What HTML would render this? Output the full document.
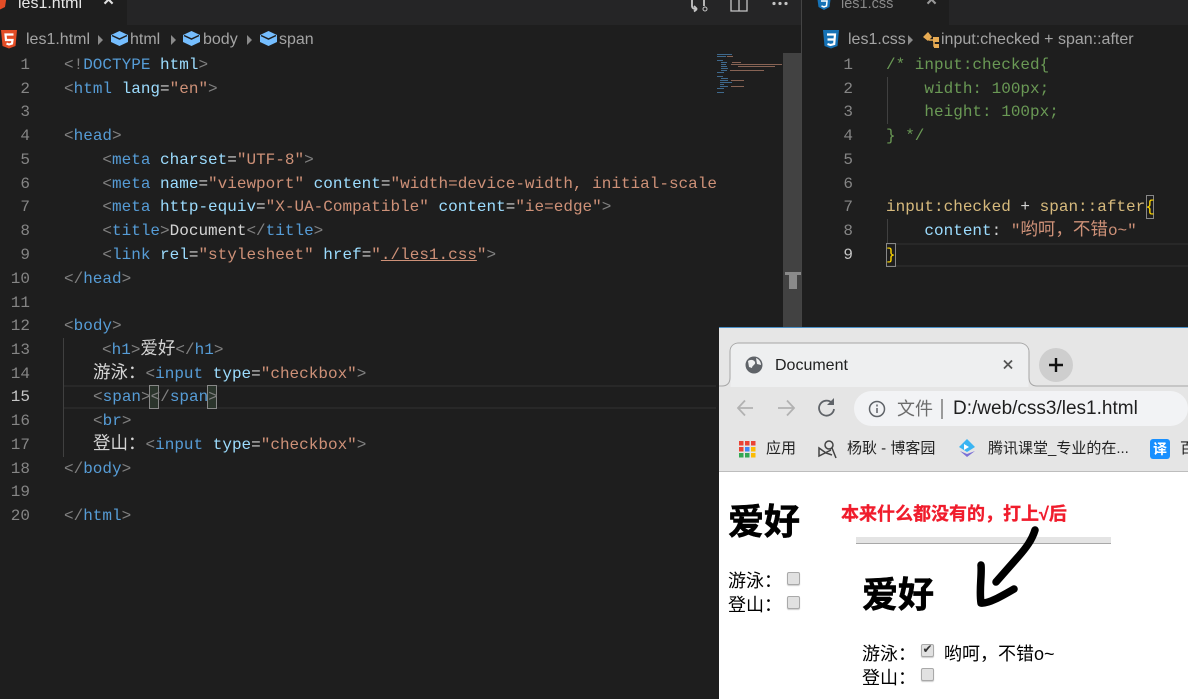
<!DOCTYPE html>
<html lang="zh"><head><meta charset="utf-8"><title>Document</title>
<style>
*{box-sizing:border-box}
html,body{margin:0;padding:0;width:1188px;height:699px;overflow:hidden;background:#1e1e1e}
body{position:relative;font-family:"Liberation Sans","Noto Sans CJK SC",sans-serif}
.a{position:absolute;white-space:pre}
.c{font:16px/24px "Liberation Mono","Noto Sans CJK SC",monospace;color:#d4d4d4;height:24px}
.z{font-size:17.5px;line-height:24px}
.n{font:16px/24px "Liberation Mono",monospace;color:#858585;text-align:right;width:30px;height:24px}
.g{color:#808080}.t{color:#569cd6}.h{color:#9cdcfe}.s{color:#ce9178}.m{color:#6a9955}.y{color:#d7ba7d}
.b{font-size:16px;line-height:20px;color:#a4a4a4}
.cb{position:absolute;width:13px;height:13px;background:#e1e1e1;border:1px solid #a9a9a9;border-radius:2px;box-shadow:0 1px 1px #ccc}
.k{color:#000;font-size:18px;line-height:24px}
.h1{color:#000;font-weight:bold;font-size:36px;line-height:44px;-webkit-text-stroke:.6px #000}
.bm{font-size:15px;line-height:20px;color:#222}
</style></head><body>
<!-- VS Code left -->
<div class="a" style="left:0;top:0;width:802px;height:25px;background:#252526"></div>
<div class="a" style="left:0;top:0;width:127px;height:25px;background:#1e1e1e"></div>
<div class="a" style="left:18px;top:-6px;font-size:16px;line-height:20px;color:#e8e8e8">les1.html</div>
<div class="a" style="left:103px;top:-9px;font-size:19px;line-height:20px;color:#e0e0e0;font-weight:bold">×</div>
<svg class="a" style="left:0;top:0" width="802" height="52">
<path d="M-8-6H7L5 7-1 10-6 7Z" fill="#e44d26"/>
<path d="M1 30H17L15.500 46 9 48.500 2.500 46Z" fill="#e44d26"/>
<path d="M13.500 34.500H5.500L6 40H12.500L12 43.500 9 44.500 6.500 43.500" fill="none" stroke="#fff" stroke-width="2.200"/>
<path d="M98 35L103 40 98 45Z" fill="#8a8a8a"/><path d="M171 35L176 40 171 45Z" fill="#8a8a8a"/><path d="M247 35L252 40 247 45Z" fill="#8a8a8a"/>
<g><path d="M111 35L119.500 31 128 35V42L119.500 46 111 42Z" fill="#75beff"/><path d="M112 35.500L119.500 39 127 35.500" fill="none" stroke="#1e1e1e" stroke-width="1.500"/></g>
<g transform="translate(72,0)"><path d="M111 35L119.500 31 128 35V42L119.500 46 111 42Z" fill="#75beff"/><path d="M112 35.500L119.500 39 127 35.500" fill="none" stroke="#1e1e1e" stroke-width="1.500"/></g>
<g transform="translate(149,0)"><path d="M111 35L119.500 31 128 35V42L119.500 46 111 42Z" fill="#75beff"/><path d="M112 35.500L119.500 39 127 35.500" fill="none" stroke="#1e1e1e" stroke-width="1.500"/></g>
<path d="M692 0V6C692 9 695 9 697 9M697 9L694 6M697 9L694 11.500M704 0V6" fill="none" stroke="#c5c5c5" stroke-width="1.800"/><circle cx="705" cy="9" r="2" fill="none" stroke="#c5c5c5"/>
<path d="M731 0V11H747V0M739 0V11" fill="none" stroke="#c5c5c5" stroke-width="1.300"/>
<circle cx="774" cy="3.500" r="1.600" fill="#c5c5c5"/><circle cx="780" cy="3.500" r="1.600" fill="#c5c5c5"/><circle cx="786" cy="3.500" r="1.600" fill="#c5c5c5"/>
</svg>
<div class="a b" style="left:26px;top:30px">les1.html</div>
<div class="a b" style="left:130px;top:30px">html</div>
<div class="a b" style="left:203px;top:30px">body</div>
<div class="a b" style="left:279px;top:30px">span</div>

<div class="a" style="left:64px;top:385px;width:652px;height:24px;border-top:2px solid #282828;border-bottom:2px solid #282828"></div>
<div class="a" style="left:63px;top:338px;width:1px;height:119px;background:#404040"></div>
<div class="a" style="left:149px;top:385px;width:10px;height:24px;border:1px solid #888;background:#2b352c"></div>
<div class="a" style="left:207px;top:385px;width:10px;height:24px;border:1px solid #888;background:#2b352c"></div>

<div class="a n" style="left:0;top:53px">1</div>
<div class="a n" style="left:0;top:77px">2</div>
<div class="a n" style="left:0;top:100px">3</div>
<div class="a n" style="left:0;top:124px">4</div>
<div class="a n" style="left:0;top:148px">5</div>
<div class="a n" style="left:0;top:172px">6</div>
<div class="a n" style="left:0;top:195px">7</div>
<div class="a n" style="left:0;top:219px">8</div>
<div class="a n" style="left:0;top:243px">9</div>
<div class="a n" style="left:0;top:267px">10</div>
<div class="a n" style="left:0;top:291px">11</div>
<div class="a n" style="left:0;top:314px">12</div>
<div class="a n" style="left:0;top:338px">13</div>
<div class="a n" style="left:0;top:362px">14</div>
<div class="a n" style="left:0;top:385px;color:#c6c6c6">15</div>
<div class="a n" style="left:0;top:409px">16</div>
<div class="a n" style="left:0;top:433px">17</div>
<div class="a n" style="left:0;top:457px">18</div>
<div class="a n" style="left:0;top:480px">19</div>
<div class="a n" style="left:0;top:504px">20</div>

<div style="position:absolute;left:0;top:0;width:716px;height:699px;overflow:hidden">
<div class="a c" style="left:64px;top:53px"><span class="g">&lt;!</span><span class="t">DOCTYPE</span> <span class="h">html</span><span class="g">&gt;</span></div>
<div class="a c" style="left:64px;top:77px"><span class="g">&lt;</span><span class="t">html</span> <span class="h">lang</span>=<span class="s">"en"</span><span class="g">&gt;</span></div>
<div class="a c" style="left:64px;top:124px"><span class="g">&lt;</span><span class="t">head</span><span class="g">&gt;</span></div>
<div class="a c" style="left:64px;top:148px">    <span class="g">&lt;</span><span class="t">meta</span> <span class="h">charset</span>=<span class="s">"UTF-8"</span><span class="g">&gt;</span></div>
<div class="a c" style="left:64px;top:172px">    <span class="g">&lt;</span><span class="t">meta</span> <span class="h">name</span>=<span class="s">"viewport"</span> <span class="h">content</span>=<span class="s">"width=device-width, initial-scale=1.0"</span><span class="g">&gt;</span></div>
<div class="a c" style="left:64px;top:195px">    <span class="g">&lt;</span><span class="t">meta</span> <span class="h">http-equiv</span>=<span class="s">"X-UA-Compatible"</span> <span class="h">content</span>=<span class="s">"ie=edge"</span><span class="g">&gt;</span></div>
<div class="a c" style="left:64px;top:219px">    <span class="g">&lt;</span><span class="t">title</span><span class="g">&gt;</span>Document<span class="g">&lt;/</span><span class="t">title</span><span class="g">&gt;</span></div>
<div class="a c" style="left:64px;top:243px">    <span class="g">&lt;</span><span class="t">link</span> <span class="h">rel</span>=<span class="s">"stylesheet"</span> <span class="h">href</span>=<span class="s">"<u>./les1.css</u>"</span><span class="g">&gt;</span></div>
<div class="a c" style="left:64px;top:267px"><span class="g">&lt;/</span><span class="t">head</span><span class="g">&gt;</span></div>
<div class="a c" style="left:64px;top:314px"><span class="g">&lt;</span><span class="t">body</span><span class="g">&gt;</span></div>
<div class="a c" style="left:102px;top:338px"><span class="g">&lt;</span><span class="t">h1</span><span class="g">&gt;</span><span class="z">爱好</span><span class="g">&lt;/</span><span class="t">h1</span><span class="g">&gt;</span></div>
<div class="a c" style="left:93px;top:362px"><span class="z">游泳：</span><span class="g">&lt;</span><span class="t">input</span> <span class="h">type</span>=<span class="s">"checkbox"</span><span class="g">&gt;</span></div>
<div class="a c" style="left:93px;top:385px"><span class="g">&lt;</span><span class="t">span</span><span class="g">&gt;&lt;/</span><span class="t">span</span><span class="g">&gt;</span></div>
<div class="a c" style="left:93px;top:409px"><span class="g">&lt;</span><span class="t">br</span><span class="g">&gt;</span></div>
<div class="a c" style="left:93px;top:433px"><span class="z">登山：</span><span class="g">&lt;</span><span class="t">input</span> <span class="h">type</span>=<span class="s">"checkbox"</span><span class="g">&gt;</span></div>
<div class="a c" style="left:64px;top:457px"><span class="g">&lt;/</span><span class="t">body</span><span class="g">&gt;</span></div>
<div class="a c" style="left:64px;top:504px"><span class="g">&lt;/</span><span class="t">html</span><span class="g">&gt;</span></div>
</div>

<!-- minimap -->
<svg class="a" style="left:716px;top:52px" width="67" height="44">
<g stroke-width="1" fill="none" opacity=".6">
<path d="M1 2.500H16M1 4.500H10M1 8.500H7M5 10.500H11M5 12.500H10M5 14.500H11M5 16.500H12M5 18.500H11M1 20.500H8M1 24.500H7M5 26.500H12M4 28.500H12M4 30.500H16M4 32.500H8M4 34.500H12M1 36.500H8M1 40.500H8" stroke="#569cd6"/>
<path d="M11 4.500H17M16 10.500H25M15 12.500H66M22 14.500H59M14 18.500H48M15 28.500H28M15 34.500H28" stroke="#ce9178"/>
</g></svg>
<div class="a" style="left:783px;top:53px;width:19px;height:274px;background:#424242"></div>
<div class="a" style="left:785px;top:272px;width:16px;height:3px;background:#8a8a8a"></div>
<div class="a" style="left:789px;top:275px;width:8px;height:14px;background:#8a8a8a"></div>
<div class="a" style="left:801px;top:0;width:1px;height:699px;background:#444"></div>

<!-- VS Code right -->
<div class="a" style="left:802px;top:0;width:386px;height:25px;background:#252526"></div>
<div class="a" style="left:802px;top:0;width:147px;height:25px;background:#1e1e1e"></div>
<div class="a" style="left:841px;top:-6px;font-size:14.500px;line-height:20px;color:#8a8a8a">les1.css</div>
<div class="a" style="left:926px;top:-9px;font-size:19px;line-height:20px;color:#999;font-weight:bold">×</div>
<svg class="a" style="left:802px;top:0" width="386" height="52">
<path d="M15-4H29L27.500 7 22 10 16.500 7Z" fill="#1572b6"/>
<path d="M19 1H25L24.500 6 22 7 19.500 6" fill="none" stroke="#fff" stroke-width="1.500"/>
<path d="M21 30H37L35.500 46 29 48.500 22.500 46Z" fill="#1572b6"/>
<path d="M25 34.500H33L32.200 44 28.500 45 25.500 44M25.500 39.500H32" fill="none" stroke="#fff" stroke-width="2.200"/>
<path d="M106 35L111 40 106 45Z" fill="#8a8a8a"/>
<path d="M121 37L126 32 130 37 126 41Z" fill="#e8ab53"/>
<path d="M127 40H136M132 40V46H135" fill="none" stroke="#e8ab53" stroke-width="1.500"/>
<path d="M131 37H137V42H131ZM132 44H137V48H132Z" fill="#e8ab53"/>
</svg>
<div class="a b" style="left:848px;top:30px">les1.css</div>
<div class="a b" style="left:941px;top:30px">input:checked + span::after</div>

<div class="a" style="left:886px;top:243px;width:302px;height:24px;border-top:2px solid #282828;border-bottom:2px solid #282828"></div>
<div class="a" style="left:887px;top:77px;width:1px;height:47px;background:#404040"></div>
<div class="a" style="left:887px;top:219px;width:1px;height:24px;background:#404040"></div>
<div class="a" style="left:1146px;top:195px;width:8px;height:24px;border:1px solid #888"></div>
<div class="a" style="left:886px;top:243px;width:10px;height:24px;border:1px solid #888"></div>

<div class="a n" style="left:823px;top:53px">1</div>
<div class="a n" style="left:823px;top:77px">2</div>
<div class="a n" style="left:823px;top:100px">3</div>
<div class="a n" style="left:823px;top:124px">4</div>
<div class="a n" style="left:823px;top:148px">5</div>
<div class="a n" style="left:823px;top:172px">6</div>
<div class="a n" style="left:823px;top:195px">7</div>
<div class="a n" style="left:823px;top:219px">8</div>
<div class="a n" style="left:823px;top:243px;color:#c6c6c6">9</div>

<div class="a c m" style="left:886px;top:53px;color:#6a9955">/* input:checked{</div>
<div class="a c" style="left:886px;top:77px;color:#6a9955">    width: 100px;</div>
<div class="a c" style="left:886px;top:100px;color:#6a9955">    height: 100px;</div>
<div class="a c" style="left:886px;top:124px;color:#6a9955">} */</div>
<div class="a c" style="left:886px;top:195px"><span class="y">input:checked</span> + <span class="y">span::after</span><span style="color:#ffd700">{</span></div>
<div class="a c" style="left:886px;top:219px">    <span class="h">content</span>: <span class="s">"<span class="z">哟呵，不错</span>o~"</span></div>
<div class="a c" style="left:886px;top:243px;color:#ffd700">}</div>

<!-- Chrome window -->
<div class="a" style="left:716px;top:327px;width:3px;height:372px;background:#1e1e1e"></div>
<div class="a" style="left:719px;top:327px;width:469px;height:145px;background:#e6e6e6;border-top:1px solid #4a90c8"></div>
<div class="a" style="left:719px;top:471px;width:469px;height:1px;background:#bdbdbd"></div>
<svg class="a" style="left:719px;top:328px" width="469" height="144">
<rect x="0" y="59" width="469" height="84" fill="#e5e5e5"/>
<path d="M0 58H3C8 58 11 55 11 50V24C11 18 15 15 20 15H300C306 15 310 19 310 24V50C310 55 313 58 318 58H469" fill="none" stroke="#a5a5a5" stroke-width="1"/>
<path d="M11.500 59V24C11.500 18 15 15.500 20 15.500H300C306 15.500 309.500 19 309.500 24V59Z" fill="#eeeff0"/>
<circle cx="35" cy="37" r="8.500" fill="#5f6368"/>
<path d="M29 33C32 31 35 32 36 34 37 37 33 37 33 40L30 39ZM37 30C40 31 42 34 42 37L38 36Z" fill="#eeeff0"/>
<path d="M285 32.500L293 40.500M293 32.500L285 40.500" stroke="#555" stroke-width="1.800"/>
<circle cx="337" cy="37" r="17" fill="#cecece"/>
<path d="M337 30V44M330 37H344" stroke="#111" stroke-width="2.400"/>
<path d="M34 80H19M26 72.500L19 80 26 87.500" fill="none" stroke="#b2b2b2" stroke-width="1.800"/>
<path d="M59 80H75M68 72.500L75 80 68 87.500" fill="none" stroke="#b2b2b2" stroke-width="1.800"/>
<path d="M113 75A7.500 7.500 0 1 0 115 81" fill="none" stroke="#5f6368" stroke-width="1.800"/><path d="M115 70V77H108Z" fill="#5f6368"/>
<rect x="135" y="63" width="334" height="35" rx="17.500" fill="#f2f3f5"/>
<circle cx="158" cy="81" r="7.500" fill="none" stroke="#5f6368" stroke-width="1.500"/>
<path d="M158 80V85M158 76.500V78.500" stroke="#5f6368" stroke-width="1.500"/>
<rect x="222" y="71" width="2" height="20" fill="#9a9a9a"/>
<g><rect x="20" y="113" width="4.500" height="4.500" fill="#ea4335"/><rect x="26" y="113" width="4.500" height="4.500" fill="#ea4335"/><rect x="32" y="113" width="4.500" height="4.500" fill="#ea4335"/>
<rect x="20" y="119" width="4.500" height="4.500" fill="#ea4335"/><rect x="26" y="119" width="4.500" height="4.500" fill="#4285f4"/><rect x="32" y="119" width="4.500" height="4.500" fill="#fbbc05"/>
<rect x="20" y="125" width="4.500" height="4.500" fill="#34a853"/><rect x="26" y="125" width="4.500" height="4.500" fill="#34a853"/><rect x="32" y="125" width="4.500" height="4.500" fill="#fbbc05"/></g>
<circle cx="110" cy="117" r="4" fill="none" stroke="#444" stroke-width="1.500"/>
<path d="M113 120L117 130M112 122L100 128 100 120 107 125 113 127" fill="none" stroke="#444" stroke-width="1.500"/>
<path d="M240 119L248 111 256 119 248 124Z" fill="#3ab4f2"/><path d="M245 116V122L250 119Z" fill="#fff"/><path d="M241 123L248 129 256 123 248 126Z" fill="#7b6fd6"/>
<rect x="431" y="111" width="20" height="20" rx="3" fill="#1890ff"/>
</svg>
<div class="a" style="left:775px;top:355px;font-size:16px;line-height:20px;color:#222;top:356px">Document</div>
<div class="a" style="left:897px;top:397px;font-size:18px;line-height:24px;color:#6c6c6c">文件</div>
<div class="a" style="left:953px;top:397px;font-size:19px;line-height:24px;color:#1f1f1f">D:/web/css3/les1.html</div>
<div class="a bm" style="left:766px;top:439px">应用</div>
<div class="a bm" style="left:847px;top:439px">杨耿 - 博客园</div>
<div class="a bm" style="left:988px;top:439px">腾讯课堂_专业的在...</div>
<div class="a" style="left:1153px;top:439px;font-size:14px;line-height:20px;color:#fff;font-weight:bold">译</div>
<div class="a bm" style="left:1180px;top:439px">百</div>

<!-- Page -->
<div class="a" style="left:719px;top:472px;width:469px;height:227px;background:#fff"></div>
<div class="a h1" style="left:728px;top:500px">爱好</div>
<div class="a k" style="left:728px;top:569px">游泳：</div>
<div class="a k" style="left:728px;top:593px">登山：</div>
<div class="cb" style="left:787px;top:572px"></div>
<div class="cb" style="left:787px;top:596px"></div>
<div class="a" style="left:841px;top:503px;font-size:18px;line-height:22px;font-weight:bold;color:#f01c2c;-webkit-text-stroke:.3px #f01c2c">本来什么都没有的，打上√后</div>
<div class="a" style="left:856px;top:537px;width:255px;height:7px;background:#e4e4e4;border-bottom:1px solid #a8a8a8"></div>
<div class="a h1" style="left:862px;top:573px">爱好</div>
<div class="a k" style="left:862px;top:642px">游泳：</div>
<div class="a k" style="left:944px;top:642px">哟呵，不错o~</div>
<div class="a k" style="left:862px;top:666px">登山：</div>
<div class="cb" style="left:921px;top:644px"></div>
<div class="a" style="left:921px;top:641px;width:13px;height:16px;font-size:12px;line-height:16px;text-align:center;color:#333">✔</div>
<div class="cb" style="left:921px;top:668px"></div>
<svg class="a" style="left:960px;top:510px" width="100" height="110">
<path d="M75 20C72 30 66 38 58 47 50 56 44 63 36 72" fill="none" stroke="#000" stroke-width="7.500" stroke-linecap="round"/>
<path d="M21 55C22 65 19 80 21 93 28 94 42 86 54 79" fill="none" stroke="#000" stroke-width="7.500" stroke-linecap="round" stroke-linejoin="round"/>
</svg>
</body></html>
